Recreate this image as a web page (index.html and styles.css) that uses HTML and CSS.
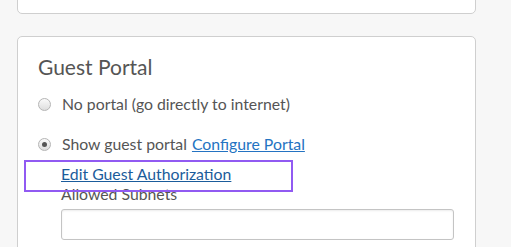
FILE: index.html
```html
<!DOCTYPE html>
<html>
<head>
    <meta charset="UTF-8">
    <title>Guest Portal</title>
    <link rel="stylesheet" href="styles.css">
</head>
<body>
    <div class="card card-top"></div>

    <div class="card">
        <h2>Guest Portal</h2>
        <label class="radio-row">
            <span class="radio"></span>
            No portal (go directly to internet)
        </label>
        <label class="radio-row">
            <span class="radio checked"></span>
            Show guest portal <a href="#" class="link">Configure Portal</a>
        </label>
        <div class="sub">
            <div class="auth-row">
                <a href="#" class="link dark">Edit Guest Authorization</a>
                <div class="highlight"></div>
            </div>
            <div class="field-label">Allowed Subnets</div>
            <input type="text" class="field">
        </div>
    </div>
</body>
</html>
```

FILE: styles.css
```css
body {
    margin: 0;
    background-color: #f7f7f7;
    font-family: Lato, "Open Sans", sans-serif;
    color: #555;
    overflow: hidden;
}
.card {
    width: 459px;
    margin-left: 17px;
    background-color: #fff;
    border: 1px solid #cfcfcf;
    border-radius: 5px;
    padding: 0 20px 0 20px;
    box-sizing: border-box;
    height: 230px;
}
.card-top {
    height: 40px;
    margin-top: -26px;
    margin-bottom: 22px;
}
h2 {
    font-size: 21px;
    font-weight: normal;
    margin: 17px 0 14px 0;
    line-height: 26px;
}
.radio-row {
    display: flex;
    align-items: center;
    font-size: 15.8px;
    line-height: 20px;
    margin-bottom: 20px;
}
.radio {
    width: 11px;
    height: 11px;
    border: 1px solid #b5b5b5;
    border-radius: 50%;
    background: linear-gradient(#fafafa, #dedede);
    margin-right: 11px;
    position: relative;
}
.radio.checked::after {
    content: "";
    position: absolute;
    left: 3px;
    top: 3px;
    width: 5px;
    height: 5px;
    border-radius: 50%;
    background-color: #555;
}
.link {
    color: #2473c2;
    margin-left: 5px;
}
.link.dark {
    color: #1b5c9b;
    margin-left: 0;
}
.sub {
    padding-left: 23px;
    margin-top: -10px;
}
.auth-row {
    position: relative;
    font-size: 15.8px;
    line-height: 20px;
}
.highlight {
    position: absolute;
    left: -37px;
    top: -4px;
    width: 265px;
    height: 28px;
    border: 2px solid #915af2;
}
.field-label {
    font-size: 15.8px;
    line-height: 20px;
}
.field {
    display: block;
    margin-top: 5px;
    width: 393px;
    height: 31px;
    box-sizing: border-box;
    border: 1px solid #c4c4c4;
    border-radius: 3px;
    box-shadow: inset 0 1px 2px rgba(0,0,0,0.08);
}
```
